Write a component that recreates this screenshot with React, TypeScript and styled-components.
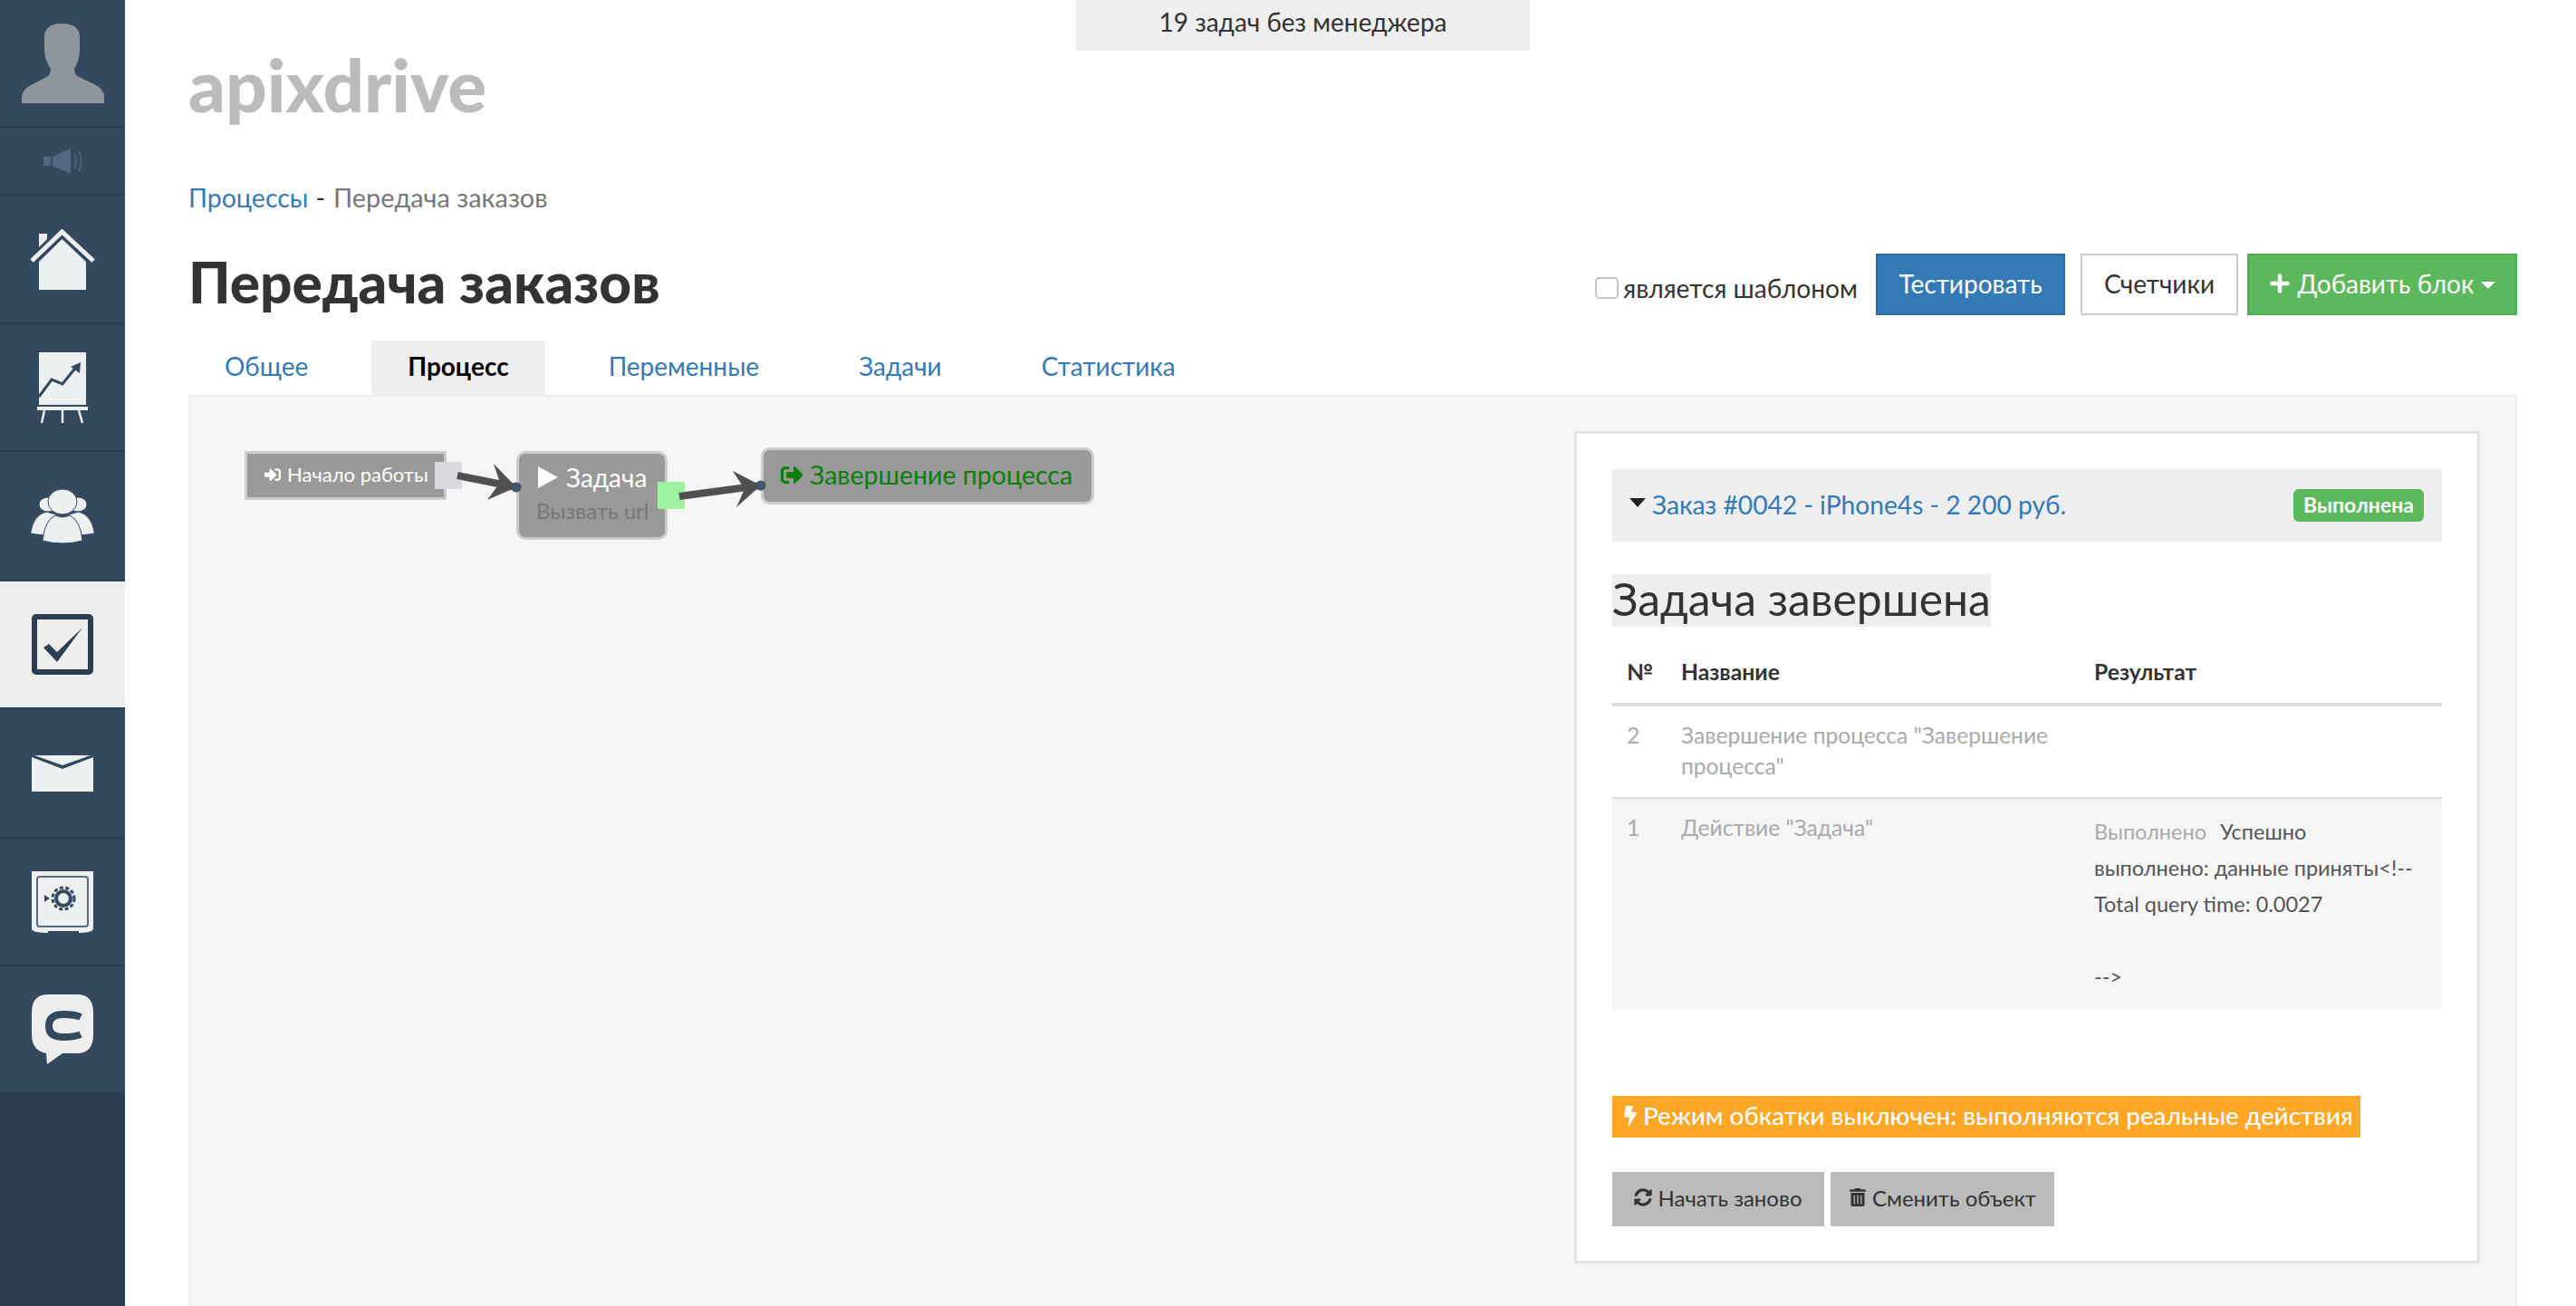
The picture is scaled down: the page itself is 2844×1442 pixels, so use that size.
import React from "react";
import styled, { createGlobalStyle } from "styled-components";
import { FaBolt, FaPlus, FaSignInAlt, FaSignOutAlt, FaSyncAlt, FaTrashAlt } from "react-icons/fa";

const Global = createGlobalStyle`
  html, body { margin: 0; padding: 0; height: 100%; background: #fff; overflow: hidden; }
  body { font-family: Lato, "Open Sans", "Liberation Sans", sans-serif; color: #333; }
  * { box-sizing: border-box; }
`;

const Page = styled.div`
  display: flex;
  height: 1442px;
  position: relative;
`;

const Sidebar = styled.nav`
  flex: 0 0 138px;
  background: #2c3e50;
  display: flex;
  flex-direction: column;
`;

const SideItem = styled.div<{ $h: number; $active?: boolean }>`
  height: ${(p) => p.$h}px;
  background: ${(p) => (p.$active ? "#eeeeee" : "#34495e")};
  border-bottom: 2px solid #2c3e50;
  display: flex;
  align-items: center;
  justify-content: center;
  flex: none;
`;

const Main = styled.main`
  flex: 1;
  padding: 0 65px 0 70px;
  display: flex;
  flex-direction: column;
  min-width: 0;
`;

const TopNotice = styled.div`
  position: absolute;
  top: 0;
  left: 1188px;
  width: 501px;
  height: 56px;
  background: #eeeeee;
  font-size: 28px;
  line-height: 49px;
  text-align: center;
  color: #333;
`;

const Logo = styled.div`
  margin-top: 48px;
  height: 92px;
  font-size: 80px;
  line-height: 90px;
  font-weight: 900;
  color: #bbbbbb;
`;

const Breadcrumb = styled.div`
  margin-top: 58px;
  height: 40px;
  font-size: 28.5px;
  line-height: 40px;
  color: #777;
  display: flex;
`;

const Crumb = styled.a`
  color: #337ab7;
`;

const CrumbSep = styled.span`
  color: #333;
  margin: 0 9px 0 8px;
`;

const CrumbCurrent = styled.span`
  font-size: 28.900px;
`;

const TitleRow = styled.div`
  margin-top: 42px;
  height: 68px;
  display: flex;
  align-items: center;
  justify-content: space-between;
`;

const Title = styled.h1`
  margin: -6px 0 0;
  font-size: 62.200px;
  line-height: 68px;
  font-weight: 900;
  color: #333;
`;

const Actions = styled.div`
  display: flex;
  align-items: center;
`;

const TemplateLabel = styled.label`
  display: flex;
  align-items: center;
  font-size: 28.2px;
  color: #333;
  margin: 8px 20px 0 0;
`;

const CheckBox = styled.span`
  width: 26px;
  height: 24px;
  border: 2px solid #c4c4c4;
  border-radius: 5px;
  background: #fff;
  margin-right: 5px;
`;

const Button = styled.button<{ $kind: "blue" | "plain" | "green" }>`
  height: 68px;
  font: inherit;
  font-size: 28px;
  padding: 0 0 3px;
  border-radius: 0;
  display: flex;
  align-items: center;
  justify-content: center;
  gap: 8px;
  color: ${(p) => (p.$kind === "plain" ? "#333" : "#fff")};
  background: ${(p) => (p.$kind === "blue" ? "#337ab7" : p.$kind === "green" ? "#5cb85c" : "#fff")};
  border: 2px solid ${(p) => (p.$kind === "blue" ? "#2e6da4" : p.$kind === "green" ? "#4cae4c" : "#cccccc")};
`;

const TestButton = styled(Button)`
  width: 209px;
  margin-right: 17px;
`;

const CountersButton = styled(Button)`
  width: 174px;
  margin-right: 10px;
`;

const AddButton = styled(Button)`
  width: 298px;
`;

const Caret = styled.span`
  width: 0;
  height: 0;
  border-left: 8px solid transparent;
  border-right: 8px solid transparent;
  border-top: 8px solid currentColor;
  margin-top: 4px;
`;

const Tabs = styled.div`
  margin-top: 28px;
  height: 60px;
  display: flex;
  gap: 30px;
`;

const Tab = styled.a<{ $active?: boolean }>`
  padding: 0 40px;
  font-size: 28px;
  line-height: 56px;
  font-weight: ${(p) => (p.$active ? 700 : 400)};
  color: ${(p) => (p.$active ? "#000" : "#337ab7")};
  background: ${(p) => (p.$active ? "#eeeeee" : "transparent")};
`;

const Panel = styled.section`
  flex: 1;
  background: #f5f5f5;
  border: 2px solid #eeeeee;
  border-bottom: none;
  padding: 38px 39px 0 0;
  display: flex;
  justify-content: space-between;
  align-items: flex-start;
`;

const Canvas = styled.div`
  position: relative;
  flex: 1;
  height: 300px;
`;

const Node = styled.div<{ $x: number; $y: number; $w: number; $h: number; $r: number }>`
  position: absolute;
  left: ${(p) => p.$x}px;
  top: ${(p) => p.$y}px;
  width: ${(p) => p.$w}px;
  height: ${(p) => p.$h}px;
  border-radius: ${(p) => p.$r}px;
  background: #999999;
  border: 3px solid #cccccc;
`;

const NodeLine = styled.div<{ $color: string; $size: number; $x: number; $y: number; $gap?: number }>`
  position: absolute;
  left: ${(p) => p.$x}px;
  top: ${(p) => p.$y}px;
  display: flex;
  align-items: center;
  gap: ${(p) => p.$gap ?? 7}px;
  white-space: nowrap;
  color: ${(p) => p.$color};
  font-size: ${(p) => p.$size}px;
  line-height: 34px;
`;

const Port = styled.div<{ $x: number; $y: number; $color: string }>`
  position: absolute;
  left: ${(p) => p.$x}px;
  top: ${(p) => p.$y}px;
  width: 30px;
  height: 30px;
  background: ${(p) => p.$color};
`;

const Wires = styled.svg`
  position: absolute;
  left: 0;
  top: 0;
  overflow: visible;
`;

const Card = styled.div`
  flex: none;
  width: 1000px;
  height: 919px;
  background: #fff;
  border: 3px solid #e4e4e4;
  padding: 39px 39px;
`;

const OrderBar = styled.div`
  height: 80px;
  background: #eeeeee;
  display: flex;
  align-items: center;
  justify-content: space-between;
  padding: 0 20px 0 19px;
`;

const OrderLink = styled.a`
  display: flex;
  align-items: center;
  gap: 7px;
  color: #337ab7;
  font-size: 28.2px;
  margin-top: -3px;
`;

const OrderCaret = styled.span`
  width: 0;
  height: 0;
  border-left: 9px solid transparent;
  border-right: 9px solid transparent;
  border-top: 10px solid #222;
  margin-top: -3px;
`;

const Badge = styled.span`
  width: 144px;
  height: 36px;
  background: #5cb85c;
  border-radius: 6px;
  color: #fff;
  font-size: 23px;
  font-weight: 700;
  line-height: 34px;
  text-align: center;
`;

const Heading = styled.h2`
  display: inline-block;
  margin: 36px 0 0;
  height: 58px;
  background: #eeeeee;
  font-size: 49.800px;
  line-height: 54px;
  font-weight: 400;
  color: #333;
  white-space: nowrap;
`;

const Table = styled.table`
  display: table;
  margin-top: 18px;
  width: 916px;
  table-layout: fixed;
  border-collapse: collapse;
  font-size: 24.600px;
`;

const Th = styled.th<{ $w: number }>`
  width: ${(p) => p.$w}px;
  height: 68px;
  padding: 0 0 3px 16px;
  text-align: left;
  font-weight: 700;
  font-size: 24.700px;
  color: #333;
  border-bottom: 4px solid #dddddd;
`;

const Row = styled.tr<{ $shaded?: boolean }>`
  background: ${(p) => (p.$shaded ? "#f5f5f5" : "#fff")};
  border-top: ${(p) => (p.$shaded ? "2px solid #dddddd" : "none")};
`;

const Td = styled.td<{ $shaded?: boolean }>`
  vertical-align: top;
  padding: 15px 0 ${(p) => (p.$shaded ? 16 : 17)}px 16px;
  line-height: 34px;
  color: #aaaaaa;
`;

const Result = styled.div`
  margin-top: 1px;
`;

const ResultLine = styled.div`
  height: 40px;
  line-height: 40px;
  white-space: nowrap;
  color: #555555;
  font-size: 23.500px;
`;

const MutedLabel = styled.span`
  color: #aaaaaa;
  margin-right: 15px;
`;

const ModeBar = styled.div`
  margin-top: 96px;
  width: 826px;
  height: 46px;
  background: #ffa726;
  color: #fff;
  font-size: 27.800px;
  font-weight: 500;
  line-height: 44px;
  display: flex;
  align-items: center;
  gap: 3px;
  padding: 0 0 2px 9px;
  white-space: nowrap;
`;

const BottomActions = styled.div`
  margin-top: 38px;
  display: flex;
  gap: 7px;
`;

const GreyButton = styled.button<{ $w: number }>`
  width: ${(p) => p.$w}px;
  height: 60px;
  border: none;
  background: #bbbbbb;
  color: #333;
  font: inherit;
  font-size: 24px;
  display: flex;
  align-items: center;
  justify-content: center;
  gap: 6px;
  padding: 0 0 4px;
`;

const Avatar = () => (
  <svg width="91" height="88" viewBox="22 26 91 88">
    <path fill="#8d969d" d="M22 114V106Q24 97 36 92L51 84Q54 81 54 76Q48 68 47 56V40Q48 26 66 26Q85 26 86 40V56Q85 68 80 76Q80 81 83 84L100 92Q112 97 113 106V114Z" />
  </svg>
);

const Sound = () => (
  <svg width="43" height="28" viewBox="45 162 43 28">
    <g fill="#52687f">
      <rect x="45" y="171" width="8" height="10" rx="1" />
      <path d="M55 171L75 162V190L55 181Z" />
    </g>
    <path d="M79 167Q83 176 79 185M84 165Q89 176 84 187" fill="none" stroke="#52687f" strokeWidth="1.500" />
  </svg>
);

const Home = () => (
  <svg width="72" height="67" viewBox="33 252 72 67">
    <path fill="#ecf0f1" d="M43 319V288L68.500 263L95 288V319Z" />
    <path fill="#ecf0f1" d="M43 257H52V263L43 272Z" />
    <path fill="none" stroke="#ecf0f1" strokeWidth="5" d="M35 287L68.500 255L103 287" />
  </svg>
);

const Chart = () => (
  <svg width="56" height="78" viewBox="40 389 56 78">
    <rect x="42" y="389" width="52" height="58" fill="#ecf0f1" />
    <path fill="none" stroke="#34495e" strokeWidth="3" d="M42 438L56 419L68 424L84 404" />
    <path fill="#34495e" d="M88 400L87 412L77 405Z" />
    <rect x="40" y="449" width="56" height="4" fill="#ecf0f1" />
    <path fill="none" stroke="#ecf0f1" strokeWidth="2.500" d="M48 453L45 467M68 453V467M86 453L90 467" />
  </svg>
);

const Group = () => (
  <svg width="70" height="60" viewBox="33 539 70 60">
    <g fill="#ecf0f1" stroke="#34495e" strokeWidth="1">
      <ellipse cx="52" cy="556" rx="10" ry="8" />
      <ellipse cx="85" cy="556" rx="10" ry="8" />
      <path d="M33 586Q36 568 50 564Q60 566 66 570L60 590Q42 590 33 588Z" />
      <path d="M103 586Q100 568 86 564Q76 566 70 570L76 590Q94 590 103 588Z" />
      <ellipse cx="68" cy="553" rx="16" ry="14" />
      <path d="M46 596Q48 574 60 568Q68 572 76 568Q88 574 90 596Q68 602 46 596Z" />
    </g>
  </svg>
);

const CheckIcon = () => (
  <svg width="68" height="67" viewBox="0 0 68 67">
    <rect x="3" y="3" width="62" height="61" rx="2" fill="#eeeeee" stroke="#2c3e50" strokeWidth="6" />
    <path fill="#2c3e50" d="M13 37L19 33L28 42L56 15L28 53Z" />
  </svg>
);

const Mail = () => (
  <svg width="68" height="40" viewBox="0 0 68 40">
    <path fill="#ecf0f1" d="M0 2L34 15L68 2V40H0Z" />
    <path fill="#ecf0f1" d="M3 0H65L34 11Z" />
  </svg>
);

const Safe = () => (
  <svg width="68" height="68" viewBox="0 0 68 68">
    <path fill="#ecf0f1" d="M0 0H68V64Q66 68 52 68V66H18V68Q2 68 0 64Z" />
    <rect x="6" y="6" width="56" height="55" rx="3" fill="none" stroke="#566a7e" strokeWidth="2" />
    <path fill="#34495e" d="M14 26L20 30L14 34Z" />
    <circle cx="35" cy="30" r="8" fill="none" stroke="#34495e" strokeWidth="4" />
    <circle cx="35" cy="30" r="12" fill="none" stroke="#34495e" strokeWidth="3" strokeDasharray="4 2.500" />
  </svg>
);

const Chat = () => (
  <svg width="68" height="77" viewBox="0 0 68 77">
    <path fill="#eeeeee" d="M18 0H50Q68 0 68 20V44Q68 65 50 65L34 65L17 77L16 65Q0 62 0 44V20Q0 0 18 0Z" />
    <path fill="none" stroke="#34495e" strokeWidth="8" d="M54 25Q48 22 35 22Q19 22 19 35Q19 47 35 47Q48 47 54 44" />
  </svg>
);

const items = [
  { h: 141, el: <Avatar /> },
  { h: 75, el: <Sound /> },
  { h: 142, el: <Home /> },
  { h: 141, el: <Chart /> },
  { h: 143, el: <Group /> },
  { h: 141, el: <CheckIcon />, active: true },
  { h: 143, el: <Mail /> },
  { h: 141, el: <Safe /> },
  { h: 141, el: <Chat /> },
];

export default function App() {
  return (
    <Page>
      <Global />
      <Sidebar>
        {items.map((it, i) => (
          <SideItem key={i} $h={it.h} $active={it.active}>
            {it.el}
          </SideItem>
        ))}
      </Sidebar>
      <TopNotice>19 задач без менеджера</TopNotice>
      <Main>
        <Logo>apixdrive</Logo>
        <Breadcrumb>
          <Crumb>Процессы</Crumb>
          <CrumbSep>-</CrumbSep>
          <CrumbCurrent>Передача заказов</CrumbCurrent>
        </Breadcrumb>
        <TitleRow>
          <Title>Передача заказов</Title>
          <Actions>
            <TemplateLabel>
              <CheckBox />
              является шаблоном
            </TemplateLabel>
            <TestButton $kind="blue">Тестировать</TestButton>
            <CountersButton $kind="plain">Счетчики</CountersButton>
            <AddButton $kind="green">
              <FaPlus size={24} />
              Добавить блок
              <Caret />
            </AddButton>
          </Actions>
        </TitleRow>
        <Tabs>
          <Tab>Общее</Tab>
          <Tab $active>Процесс</Tab>
          <Tab>Переменные</Tab>
          <Tab>Задачи</Tab>
          <Tab>Статистика</Tab>
        </Tabs>
        <Panel>
          <Canvas>
            <Node $x={60} $y={22} $w={223} $h={54} $r={0} />
            <NodeLine $color="#fff" $size={22} $x={82} $y={31}>
              <FaSignInAlt size={18} />
              Начало работы
            </NodeLine>
            <Port $x={270} $y={34} $color="#dcd8e0" />
            <Node $x={360} $y={22} $w={167} $h={98} $r={10} />
            <NodeLine $color="#fff" $size={28} $x={384} $y={34} $gap={9}>
              <svg width="22" height="24" viewBox="0 0 22 24">
                <path fill="#fff" d="M0 0L22 12L0 24Z" />
              </svg>
              Задача
            </NodeLine>
            <NodeLine $color="#777777" $size={24} $x={382} $y={71}>
              Вызвать url
            </NodeLine>
            <Node $x={630} $y={18} $w={368} $h={63} $r={10} />
            <NodeLine $color="#0a7f0a" $size={28.5} $x={652} $y={31}>
              <FaSignOutAlt size={25} />
              Завершение процесса
            </NodeLine>
            <Port $x={516} $y={56} $color="#9ef19e" />
            <Wires width="1" height="1">
              <g fill="#505050" stroke="none">
                <path d="M295 49L360 62" stroke="#505050" strokeWidth="8" />
                <path d="M360 62L335 36L342 57L328 76Z" />
                <path d="M540 72L630 60" stroke="#505050" strokeWidth="8" />
                <path d="M630 60L599 44L612 64L603 84Z" />
              </g>
              <circle cx="360" cy="62" r="5.500" fill="#44556b" />
              <circle cx="630" cy="60" r="5.500" fill="#44556b" />
            </Wires>
          </Canvas>
          <Card>
            <OrderBar>
              <OrderLink>
                <OrderCaret />
                Заказ #0042 - iPhone4s - 2 200 руб.
              </OrderLink>
              <Badge>Выполнена</Badge>
            </OrderBar>
            <Heading>Задача завершена</Heading>
            <Table>
              <thead>
                <tr>
                  <Th $w={60}>№</Th>
                  <Th $w={456}>Название</Th>
                  <Th $w={400}>Результат</Th>
                </tr>
              </thead>
              <tbody>
                <Row>
                  <Td>2</Td>
                  <Td>Завершение процесса "Завершение процесса"</Td>
                  <Td />
                </Row>
                <Row $shaded>
                  <Td $shaded>1</Td>
                  <Td $shaded>Действие "Задача"</Td>
                  <Td $shaded>
                    <Result>
                      <ResultLine>
                        <MutedLabel>Выполнено</MutedLabel>Успешно
                      </ResultLine>
                      <ResultLine>выполнено: данные приняты&lt;!--</ResultLine>
                      <ResultLine>Total query time: 0.0027</ResultLine>
                      <ResultLine />
                      <ResultLine>--&gt;</ResultLine>
                    </Result>
                  </Td>
                </Row>
              </tbody>
            </Table>
            <ModeBar>
              <FaBolt size={22} />
              Режим обкатки выключен: выполняются реальные действия
            </ModeBar>
            <BottomActions>
              <GreyButton $w={234}>
                <FaSyncAlt size={20} />
                Начать заново
              </GreyButton>
              <GreyButton $w={247}>
                <FaTrashAlt size={20} />
                Сменить объект
              </GreyButton>
            </BottomActions>
          </Card>
        </Panel>
      </Main>
    </Page>
  );
}
